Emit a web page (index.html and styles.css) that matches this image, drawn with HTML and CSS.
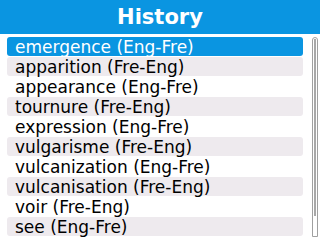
FILE: index.html
```html
<!DOCTYPE html>
<html>
<head>
<meta charset="utf-8">
<link rel="stylesheet" href="styles.css">
</head>
<body>
<div class="screen">
  <div class="title">History</div>
  <div class="main">
    <div class="list">
      <div class="row selected">emergence (Eng-Fre)</div>
      <div class="row alt">apparition (Fre-Eng)</div>
      <div class="row">appearance (Eng-Fre)</div>
      <div class="row alt">tournure (Fre-Eng)</div>
      <div class="row">expression (Eng-Fre)</div>
      <div class="row alt">vulgarisme (Fre-Eng)</div>
      <div class="row">vulcanization (Eng-Fre)</div>
      <div class="row alt">vulcanisation (Fre-Eng)</div>
      <div class="row">voir (Fre-Eng)</div>
      <div class="row alt">see (Eng-Fre)</div>
    </div>
    <div class="scroll"><div class="thumb"></div></div>
  </div>
</div>
</body>
</html>
```
FILE: styles.css
```css
html, body {
  margin: 0;
  padding: 0;
  background: #ffffff;
}
.screen {
  width: 320px;
  height: 240px;
  overflow: hidden;
  font-family: "DejaVu Sans", sans-serif;
}
.title {
  height: 34px;
  background: #0a95e1;
  color: #ffffff;
  font-weight: bold;
  font-size: 21px;
  line-height: 34px;
  text-align: center;
}
.main {
  display: flex;
  align-items: flex-start;
  padding-top: 3px;
}
.list {
  margin-left: 7px;
  width: 296px;
}
.row {
  height: 18px;
  padding-top: 1px;
  margin-bottom: 1px;
  padding-left: 8px;
  border-radius: 3px;
  font-size: 17px;
  line-height: 19px;
  color: #000000;
  white-space: nowrap;
}
.row.alt {
  background: #eeeaee;
}
.row.selected {
  background: #0a95e1;
  color: #ffffff;
}
.scroll {
  margin-left: 9px;
  width: 4px;
  height: 198px;
  border: 1px solid #a0a0a0;
  border-radius: 3px 3px 0 0;
}
.thumb {
  margin: 1px auto 0;
  width: 2px;
  height: 177px;
  background: #a8a8a8;
}
```
